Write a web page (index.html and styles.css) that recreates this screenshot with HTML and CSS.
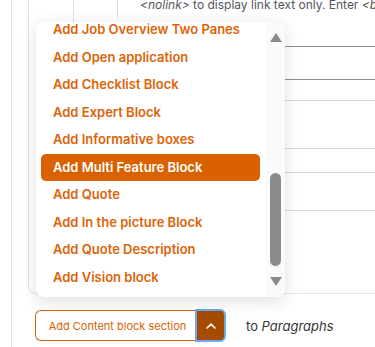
FILE: index.html
```html
<!DOCTYPE html>
<html lang="en">
<head>
    <meta charset="UTF-8">
    <meta name="viewport" content="width=device-width, initial-scale=1.0">
    <title>Add Content block section</title>
    <link rel="stylesheet" href="styles.css">
</head>
<body>
    <div class="page">
        <div class="field">
            <div class="field-top">
                <div class="col-a">
                    <div class="col-b">
                        <p class="desc"><em>&lt;nolink&gt;</em> to display link text only. Enter <em>&lt;button&gt;</em> to display keyboard-accessible link text only.</p>
                    </div>
                </div>
            </div>
            <div class="rows">
                <div class="row r1"></div>
                <div class="row r2"></div>
                <div class="row r3 light"></div>
                <div class="row r4 light"></div>
                <div class="row r5 light"></div>
                <div class="row r6 light"></div>
                <div class="row r7"></div>
            </div>
        </div>

        <div class="actions">
            <div class="split-btn">
                <button class="add-btn">Add Content block section</button>
                <button class="toggle-btn" aria-label="Show more">
                    <svg width="10" height="6" viewBox="0 0 10 6"><path d="M1 5 L5 1.2 L9 5" fill="none" stroke="#fff" stroke-width="1.6" stroke-linecap="round" stroke-linejoin="round"/></svg>
                </button>
            </div>
            <span class="to-label">to <em>Paragraphs</em></span>
        </div>

        <div class="dropdown">
            <ul class="menu-list">
                <li class="menu-item">Add Job Overview Two Panes</li>
                <li class="menu-item">Add Open application</li>
                <li class="menu-item">Add Checklist Block</li>
                <li class="menu-item">Add Expert Block</li>
                <li class="menu-item">Add Informative boxes</li>
                <li class="menu-item active">Add Multi Feature Block</li>
                <li class="menu-item">Add Quote</li>
                <li class="menu-item">Add In the picture Block</li>
                <li class="menu-item">Add Quote Description</li>
                <li class="menu-item">Add Vision block</li>
            </ul>
            <div class="scrollbar">
                <span class="arrow up"></span>
                <span class="thumb"></span>
                <span class="arrow down"></span>
            </div>
        </div>
    </div>
</body>
</html>
```

FILE: styles.css
```css
* { box-sizing: border-box; }
body {
    margin: 0;
    background: #fff;
    font-family: 'Inter', 'Liberation Sans', sans-serif;
    overflow: hidden;
}
.page {
    position: relative;
    margin-left: 11px;
    border-left: 1px solid #dedee2;
    height: 347px;
}
.field {
    margin-left: 16px;
    border-left: 1px solid #dedee2;
    border-bottom: 1px solid #e6e6ea;
    border-bottom-left-radius: 8px;
}
.field-top {
    height: 22px;
}
.col-a {
    margin-left: 44px;
    border-left: 1px solid #dedee2;
    height: 22px;
}
.col-b {
    margin-left: 43px;
    border-left: 1px solid #dedee2;
    height: 18px;
    padding-left: 22px;
    overflow: hidden;
}
.desc {
    margin: -3px 0 0 0;
    font-size: 12px;
    line-height: 15px;
    color: #55565b;
    white-space: nowrap;
}
.rows {
    margin-left: 88px;
}
.row {
    border-bottom: 1px solid #8f9096;
}
.row.light { border-bottom-color: #d6d6db; }
.r1 { height: 25px; }
.r2 { height: 33px; }
.r3 { height: 21px; }
.r4 { height: 48px; }
.r5 { height: 24px; }
.r6 { height: 38px; border-bottom-color: #e4e4e8; }
.r7 { height: 82px; border-bottom: none; }

.actions {
    display: flex;
    align-items: center;
    margin: 16px 0 0 23px;
}
.split-btn {
    display: flex;
    height: 31px;
}
.add-btn {
    width: 161px;
    height: 31px;
    padding: 0 0 0 3px;
    background: #fff;
    border: 1px solid #d96200;
    border-right: none;
    border-radius: 6px 0 0 6px;
    color: #d96200;
    font-family: inherit;
    font-size: 11px;
}
.toggle-btn {
    width: 29px;
    height: 31px;
    background: #a44b00;
    border: none;
    border-radius: 0 5px 5px 0;
    outline: 2px solid #6aa8ec;
    outline-offset: -1px;
    display: flex;
    align-items: center;
    justify-content: center;
    padding: 0;
}
.to-label {
    margin-left: 21px;
    font-size: 13px;
    color: #333;
}

.dropdown {
    position: absolute;
    left: 24px;
    top: 22px;
    width: 249px;
    height: 275px;
    background: #fff;
    border-radius: 8px;
    box-shadow: 0 4px 16px rgba(30, 30, 60, 0.14);
    display: flex;
    overflow: hidden;
}
.menu-list {
    flex: 1;
    list-style: none;
    margin: -5.75px 0 0 0;
    padding: 0 6px 0 5px;
}
.menu-item {
    height: 27.5px;
    line-height: 27.5px;
    padding-left: 12px;
    font-size: 13px;
    font-weight: 600;
    color: #dc6408;
    border-radius: 5px;
    white-space: nowrap;
}
.menu-item.active {
    background: #d96100;
    color: #fff;
}
.scrollbar {
    width: 19px;
    background: #fafafa;
    display: flex;
    flex-direction: column;
    align-items: center;
    padding-top: 11px;
}
.arrow {
    width: 0;
    height: 0;
    border-left: 6px solid transparent;
    border-right: 6px solid transparent;
}
.arrow.up { border-bottom: 9px solid #8a8a8a; }
.arrow.down { border-top: 9px solid #8a8a8a; margin-top: 11px; }
.thumb {
    width: 11px;
    height: 93px;
    margin-top: 131px;
    background: #8c8c8c;
    border-radius: 6px;
}
```
